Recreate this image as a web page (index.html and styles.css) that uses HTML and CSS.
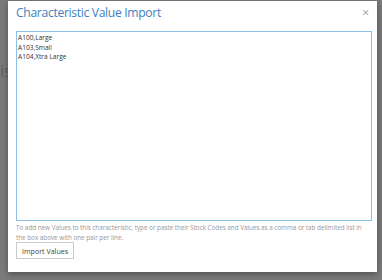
FILE: index.html
```html
<!DOCTYPE html>
<html lang="en">
<head>
  <meta charset="UTF-8" />
  <title>Characteristic Value Import</title>
  <link rel="stylesheet" href="styles.css">
</head>
<body>
  <div class="page-behind">is</div>

  <div class="overlay">
    <div class="dialog">
      <div class="dialog-header">
        <h2 class="dialog-title">Characteristic Value Import</h2>
        <span class="dialog-close">&times;</span>
      </div>

      <textarea class="import-box">A100,Large
A103,Small
A104,Xtra Large</textarea>

      <p class="help-text">To add new Values to this characteristic, type or paste their Stock Codes and Values as a comma or tab delimited list in the box above with one pair per line.</p>

      <button class="import-btn">Import Values</button>
    </div>
  </div>
</body>
</html>
```

FILE: styles.css
```css
* {
  box-sizing: border-box;
  margin: 0;
  padding: 0;
}

html, body {
  height: 100%;
  background: #7a7a7a;
  font-family: 'Open Sans', sans-serif;
  overflow: hidden;
}

.page-behind {
  position: absolute;
  left: 0;
  top: 60px;
  font-size: 16px;
  color: #5f5f5f;
}

.overlay {
  position: absolute;
  top: 1px;
  left: 8px;
  width: 369px;
  height: 271px;
}

.dialog {
  height: 100%;
  background: #fff;
  box-shadow: 0 2px 6px rgba(0, 0, 0, 0.35);
  padding: 0 5px 0 8px;
  display: flex;
  flex-direction: column;
}

.dialog-header {
  display: flex;
  align-items: flex-start;
  justify-content: space-between;
  height: 30px;
  padding-top: 3px;
}

.dialog-title {
  font-weight: normal;
  font-size: 12.2px;
  letter-spacing: -0.35px;
  color: #3f7fbf;
}

.dialog-close {
  font-size: 12px;
  line-height: 14px;
  color: #999;
  margin-right: 3px;
  margin-top: 2px;
}

.import-box {
  height: 190px;
  width: 356px;
  border: 1px solid #8dc1e3;
  padding: 1px 1px;
  font-family: 'Open Sans', sans-serif;
  font-size: 6.6px;
  line-height: 9.5px;
  color: #333;
  resize: none;
  outline: none;
}

.help-text {
  margin-top: 2px;
  font-size: 6.4px;
  line-height: 9.5px;
  letter-spacing: -0.05px;
  color: #999;
}

.import-btn {
  align-self: flex-start;
  margin-top: 0;
  height: 17px;
  padding: 0 5px;
  border: 1px solid #ccc;
  background: #fff;
  font-family: 'Open Sans', sans-serif;
  font-size: 7.1px;
  color: #444;
}
```
